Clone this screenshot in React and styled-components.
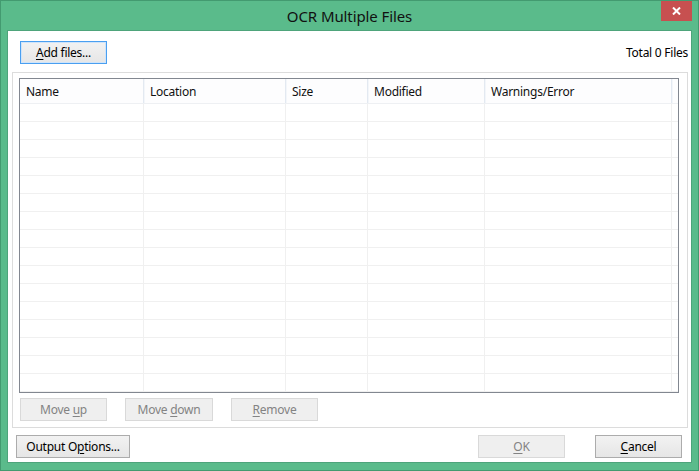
import React from "react";
import styled, { createGlobalStyle } from "styled-components";

const Global = createGlobalStyle`
  html, body { margin: 0; padding: 0; background: #ffffff; }
  body { font-family: "Noto Sans", "Open Sans", sans-serif; }
  * { box-sizing: border-box; }
`;

const Window = styled.div`
  width: 699px;
  height: 471px;
  background: #5abb8b;
  border: 1px solid #439a70;
  padding: 0 6px 7px 6px;
  display: flex;
  flex-direction: column;
`;

const TitleBar = styled.div`
  height: 29px;
  flex: none;
  position: relative;
  display: flex;
  align-items: center;
  justify-content: center;
`;

const Title = styled.div`
  font-size: 15px;
  color: #111;
  letter-spacing: -0.1px;
  padding-top: 1px;
`;

const CloseButton = styled.div`
  position: absolute;
  right: 0;
  top: 0;
  width: 31px;
  height: 20px;
  background: #c75050;
  display: flex;
  align-items: center;
  justify-content: center;
`;

const Client = styled.div`
  flex: 1;
  background: #ffffff;
  border: 1px solid #4ea47b;
  padding: 0 3px 0 4px;
  display: flex;
  flex-direction: column;
  font-size: 12px;
  letter-spacing: -0.25px;
  color: #000;
`;

const TopRow = styled.div`
  margin-top: 10px;
  height: 23px;
  padding-left: 8px;
  display: flex;
  align-items: center;
  justify-content: space-between;
`;

const Total = styled.span`
  padding-right: 0px;
`;

const Button = styled.div`
  width: ${(p) => p.$w || 87}px;
  height: 23px;
  flex: none;
  display: flex;
  align-items: center;
  justify-content: center;
  border: 1px solid ${(p) => (p.$disabled ? "#d9d9d9" : p.$focus ? "#4a9ff0" : "#acacac")};
  background: ${(p) =>
    p.$disabled ? "#efefef" : "linear-gradient(#f2f2f2, #e6e6e6)"};
  color: ${(p) => (p.$disabled ? "#838383" : "#000")};
  box-shadow: ${(p) => (p.$focus ? "inset 0 0 0 1px #cfe4fa" : "none")};
  font-size: 12px;
  line-height: 1;
  u { text-decoration: underline; text-underline-offset: 2px; }
`;

const Group = styled.div`
  margin-top: 8px;
  height: 356px;
  border: 1px solid #dcdcdc;
  padding: 5px 8px 6px 6px;
  display: flex;
  flex-direction: column;
  gap: 5px;
`;

const List = styled.div`
  height: 315px;
  border: 1px solid #828790;
  overflow: hidden;
  display: flex;
  flex-direction: column;
`;

const COLS = "124px 142px 82px 117px 187px 1fr";

const HeaderRow = styled.div`
  display: grid;
  grid-template-columns: ${COLS};
  height: 25px;
  flex: none;
  background: #fdfdfe;
  border-bottom: 1px solid #eef0f3;
`;

const HeaderCell = styled.div`
  display: flex;
  align-items: center;
  padding-left: 6px;
  padding-top: 1px;
  border-right: ${(p) => (p.$last ? "none" : "1px solid #e3e9f1")};
  box-shadow: ${(p) => (p.$last ? "none" : "1px 0 0 #f3f6fa")};
  color: #111;
  white-space: nowrap;
`;

const Row = styled.div`
  display: grid;
  grid-template-columns: ${COLS};
  height: 18px;
  flex: none;
  border-bottom: 1px solid #f0f0f0;
`;

const Cell = styled.div`
  border-right: ${(p) => (p.$last ? "none" : "1px solid #f0f0f0")};
`;

const ListButtons = styled.div`
  display: flex;
  padding-left: 1px;
  gap: 18px;
`;

const BottomRow = styled.div`
  margin-top: 7px;
  padding-left: 4px;
  padding-right: 6px;
  display: flex;
  align-items: center;
`;

const Spacer = styled.div`
  flex: 1;
`;

const DialogButtons = styled.div`
  display: flex;
  gap: 30px;
`;

const columns = ["Name", "Location", "Size", "Modified", "Warnings/Error", ""];

export default function App() {
  return (
    <>
      <Global />
      <Window>
        <TitleBar>
          <Title>OCR Multiple Files</Title>
          <CloseButton>
            <svg width="9" height="8" viewBox="0 0 9 8">
              <path d="M1 0.5 L8 7.5 M8 0.5 L1 7.5" stroke="#fff" strokeWidth="2" />
            </svg>
          </CloseButton>
        </TitleBar>
        <Client>
          <TopRow>
            <Button $focus>
              <span>
                <u>A</u>dd files...
              </span>
            </Button>
            <Total>Total 0 Files</Total>
          </TopRow>
          <Group>
            <List>
              <HeaderRow>
                {columns.map((c, i) => (
                  <HeaderCell key={i} $last={i === columns.length - 1}>
                    {c}
                  </HeaderCell>
                ))}
              </HeaderRow>
              {Array.from({ length: 16 }).map((_, r) => (
                <Row key={r}>
                  {columns.map((c, i) => (
                    <Cell key={i} $last={i === columns.length - 1} />
                  ))}
                </Row>
              ))}
            </List>
            <ListButtons>
              <Button $disabled>
                <span>
                  Move <u>u</u>p
                </span>
              </Button>
              <Button $disabled $w={88}>
                <span>
                  Move <u>d</u>own
                </span>
              </Button>
              <Button $disabled>
                <span>
                  <u>R</u>emove
                </span>
              </Button>
            </ListButtons>
          </Group>
          <BottomRow>
            <Button $w={114}>
              <span>
                Output O<u>p</u>tions...
              </span>
            </Button>
            <Spacer />
            <DialogButtons>
              <Button $disabled>
                <span>
                  <u>O</u>K
                </span>
              </Button>
              <Button>
                <span>
                  <u>C</u>ancel
                </span>
              </Button>
            </DialogButtons>
          </BottomRow>
        </Client>
      </Window>
    </>
  );
}
